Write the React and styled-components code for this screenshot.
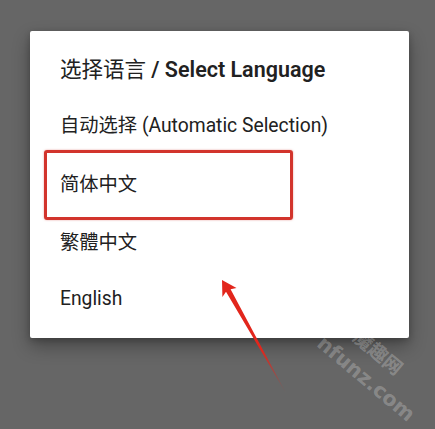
import React from 'react';
import styled, { createGlobalStyle } from 'styled-components';

const GlobalStyle = createGlobalStyle`
  html, body {
    margin: 0;
    padding: 0;
    background: #666666;
  }
  body {
    font-family: Roboto, "Noto Sans CJK SC", sans-serif;
  }
`;

const Stage = styled.div`
  position: relative;
  width: 435px;
  height: 429px;
  overflow: hidden;
  background: #666666;
  padding: 31px 0 0 30px;
  box-sizing: border-box;
`;

const Dialog = styled.div`
  width: 379px;
  height: 307px;
  box-sizing: border-box;
  background: #ffffff;
  border-radius: 2px;
  box-shadow: 0 8px 18px rgba(0, 0, 0, 0.32), 0 2px 6px rgba(0, 0, 0, 0.2);
  padding: 26px 0 11px;
  display: flex;
  flex-direction: column;
`;

const Title = styled.h2`
  margin: 0 0 12px;
  padding: 0 30px;
  font-size: 21.5px;
  line-height: 26px;
  font-weight: 400;
  color: #212121;
  white-space: nowrap;

  b {
    font-weight: 600;
  }
`;

const Option = styled.div`
  height: 58px;
  display: flex;
  align-items: center;
  padding: 0 30px;
  font-size: 19.3px;
  color: #212121;
  white-space: nowrap;
  margin-top: ${(p) => (p.$shift ? `${p.$shift}px` : '0')};
`;

const Highlight = styled.div`
  position: absolute;
  left: 44px;
  top: 150px;
  width: 249px;
  height: 70px;
  box-sizing: border-box;
  border: 3px solid #d2342c;
  border-radius: 3px;
  box-shadow: 0 0 2px rgba(210, 52, 44, 0.5);
  pointer-events: none;
`;

const Overlay = styled.svg`
  position: absolute;
  left: 0;
  top: 0;
  pointer-events: none;
`;

const Watermark = styled.span`
  position: absolute;
  left: ${(p) => p.$x}px;
  top: ${(p) => p.$y}px;
  font-size: ${(p) => p.$size}px;
  line-height: ${(p) => p.$size}px;
  font-weight: 700;
  font-family: "DejaVu Sans", "Noto Sans CJK SC", sans-serif;
  color: rgba(255, 255, 255, 0.24);
  transform: rotate(40deg);
  transform-origin: 0 50%;
  white-space: nowrap;
  pointer-events: none;
`;

const options = ['自动选择 (Automatic Selection)', '简体中文', '繁體中文', 'English'];

const App = () => (
  <>
    <GlobalStyle />
    <Stage>
      <Dialog>
        <Title>
          选择语言 <b>/ Select Language</b>
        </Title>
        {options.map((o, i) => (
          <Option key={o} $shift={i === 1 ? 2 : 0}>
            {o}
          </Option>
        ))}
      </Dialog>
      <Highlight />
      <Watermark $x={356} $y={325} $size={19}>魔趣网</Watermark>
      <Watermark $x={320} $y={330} $size={20.5}>nfunz.com</Watermark>
      <Overlay width="435" height="429" viewBox="0 0 435 429">
        <defs>
          <linearGradient id="tail" x1="222" y1="280" x2="287" y2="395" gradientUnits="userSpaceOnUse">
            <stop offset="0" stopColor="#e2261c" />
            <stop offset="0.6" stopColor="#e2261c" />
            <stop offset="1" stopColor="#e2261c" stopOpacity="0" />
          </linearGradient>
        </defs>
        <polygon
          points="222,280 222.4,297 226,291.8 287,395 230.6,289.2 236.5,288"
          fill="url(#tail)"
        />
      </Overlay>
    </Stage>
  </>
);

export default App;
